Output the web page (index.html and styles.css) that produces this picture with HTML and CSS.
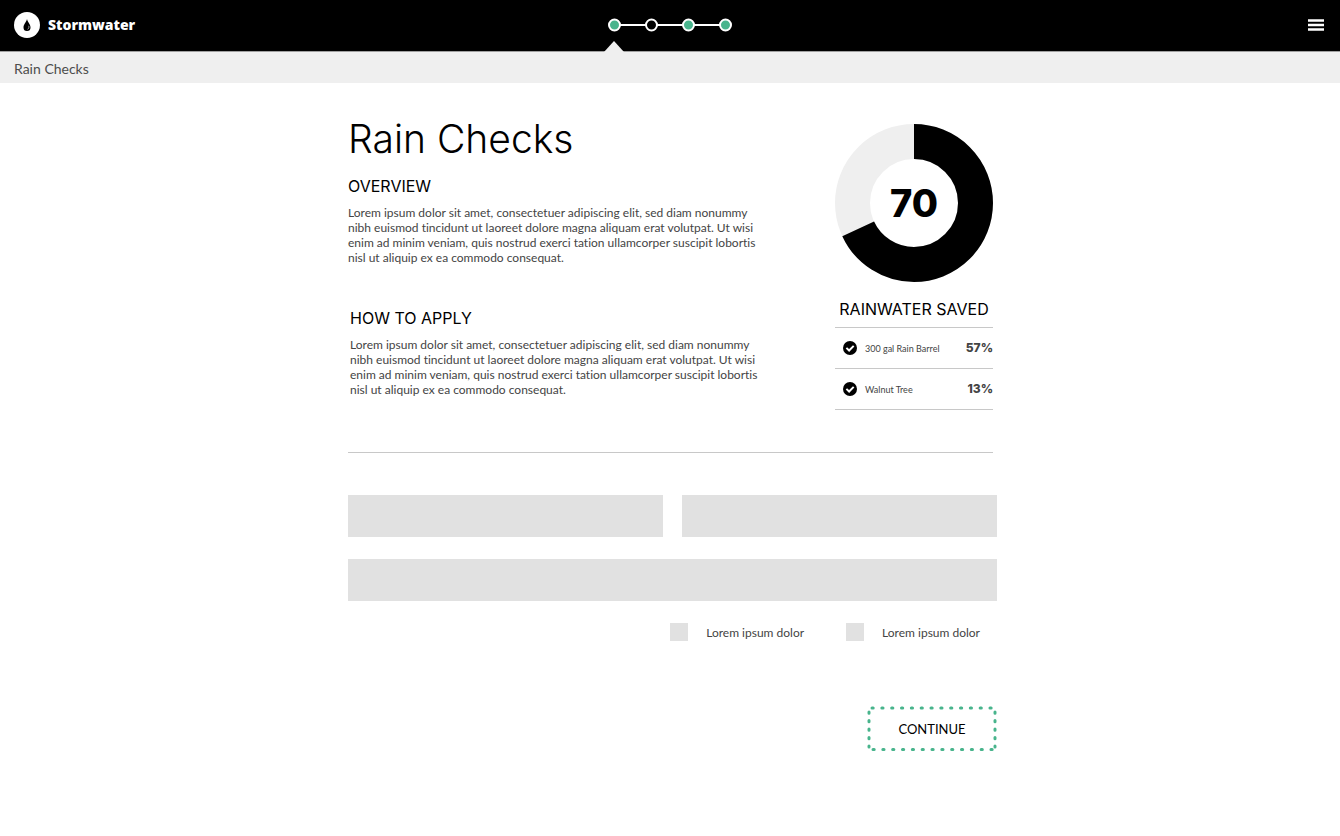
FILE: index.html
```html
<!DOCTYPE html>
<html lang="en">
<head>
<meta charset="utf-8">
<title>Stormwater – Rain Checks</title>
<meta name="viewport" content="width=device-width, initial-scale=1">
<link rel="stylesheet" href="styles.css">
</head>
<body>
<header class="topbar">
  <a class="brand" href="#">
    <svg class="brand-mark" viewBox="0 0 26 26" aria-hidden="true">
      <circle cx="13" cy="13" r="13" fill="#fff"/>
      <path d="M13 7C12.300 10.400 9.500 12.300 9.500 15.500a3.500 3.500 0 0 0 7 0C16.500 12.300 13.700 10.400 13 7z" fill="#000"/>
      <path d="M14.700 13.800c.6 1.500.1 2.800-1.200 3.500" fill="none" stroke="#fff" stroke-width=".6"/>
    </svg>
    <span>Stormwater</span>
  </a>
  <nav class="steps" aria-label="Progress">
    <svg class="steps-track" viewBox="0 0 126 16" role="img" aria-label="Step 1 of 4">
      <path d="M8 8H119" stroke="#fff" stroke-width="2"/>
      <g stroke="#fff" stroke-width="2">
        <circle cx="8.500" cy="8" r="5.500" fill="#48b48c"/>
        <circle cx="45.500" cy="8" r="5.500" fill="#000"/>
        <circle cx="82.500" cy="8" r="5.500" fill="#48b48c"/>
        <circle cx="119.500" cy="8" r="5.500" fill="#48b48c"/>
      </g>
    </svg>
    <span class="steps-pointer"></span>
  </nav>
  <button class="menu" type="button" aria-label="Menu">
    <svg viewBox="0 0 16 12" aria-hidden="true"><path d="M0 1.500H16M0 6H16M0 10.500H16" stroke="#fff" stroke-width="2.400"/></svg>
  </button>
</header>
<div class="crumb">Rain Checks</div>

<main class="page">
  <div class="intro">
    <div class="copy">
      <h1>Rain Checks</h1>
      <section>
        <h2>OVERVIEW</h2>
        <p>Lorem ipsum dolor sit amet, consectetuer adipiscing elit, sed diam nonummy nibh euismod tincidunt ut laoreet dolore magna aliquam erat volutpat. Ut wisi enim ad minim veniam, quis nostrud exerci tation ullamcorper suscipit lobortis nisl ut aliquip ex ea commodo consequat.</p>
      </section>
      <section class="apply">
        <h2>HOW TO APPLY</h2>
        <p>Lorem ipsum dolor sit amet, consectetuer adipiscing elit, sed diam nonummy nibh euismod tincidunt ut laoreet dolore magna aliquam erat volutpat. Ut wisi enim ad minim veniam, quis nostrud exerci tation ullamcorper suscipit lobortis nisl ut aliquip ex ea commodo consequat.</p>
      </section>
    </div>
    <aside class="saved">
      <div class="donut">
        <svg viewBox="0 0 158 158" aria-hidden="true">
          <g fill="none" stroke-width="35" transform="rotate(-90 79 79)">
            <circle cx="79" cy="79" r="61.500" stroke="#efefef"/>
            <circle cx="79" cy="79" r="61.500" stroke="#000" pathLength="100" stroke-dasharray="68.1 31.900"/>
          </g>
        </svg>
        <span class="donut-value">70</span>
      </div>
      <h2>RAINWATER SAVED</h2>
      <ul class="items">
        <li>
          <svg class="check" viewBox="0 0 14 14" aria-hidden="true"><circle cx="7" cy="7" r="7"/><path d="M3.400 6.900 6.100 9.500 10.700 4.900" fill="none" stroke="#fff" stroke-width="2"/></svg>
          <span class="item-name">300 gal Rain Barrel</span>
          <strong>57%</strong>
        </li>
        <li>
          <svg class="check" viewBox="0 0 14 14" aria-hidden="true"><circle cx="7" cy="7" r="7"/><path d="M3.400 6.900 6.100 9.500 10.700 4.900" fill="none" stroke="#fff" stroke-width="2"/></svg>
          <span class="item-name">Walnut Tree</span>
          <strong>13%</strong>
        </li>
      </ul>
    </aside>
  </div>

  <form class="form">
    <div class="row">
      <input class="field" type="text" aria-label="First field">
      <input class="field" type="text" aria-label="Second field">
    </div>
    <input class="field" type="text" aria-label="Third field">
    <div class="options">
      <label><input type="checkbox"><span>Lorem ipsum dolor</span></label>
      <label><input type="checkbox"><span>Lorem ipsum dolor</span></label>
    </div>
    <button class="continue" type="button">
      <svg class="dots" viewBox="0 0 130 45" aria-hidden="true">
        <g fill="none" stroke="#48b48c" stroke-width="3" stroke-linecap="round">
          <path d="M5 2H126" stroke-dasharray="1.200 8.630"/>
          <path d="M6 43.500H126" stroke-dasharray="1.200 8.630"/>
          <path d="M2 6V41" stroke-dasharray="1.200 7.300"/>
          <path d="M128 6V41" stroke-dasharray="1.200 7.300"/>
        </g>
      </svg>
      CONTINUE
    </button>
  </form>
</main>
</body>
</html>
```

FILE: styles.css
```css
* { box-sizing: border-box; }

body {
  margin: 0;
  background: #fff;
  color: #444;
  font: 12px/15px Lato, "Open Sans", sans-serif;
  font-variant-ligatures: none;
}

h1, h2, p, ul { margin: 0; padding: 0; }

h1, h2 {
  color: #000;
  font-family: Inter, Lato, sans-serif;
}

.topbar {
  display: grid;
  grid-template-columns: 1fr auto 1fr;
  align-items: center;
  height: 52px;
  padding: 0 16px 0 14px;
  background: #000;
  border-bottom: 1px solid #a0a0a0;
}

.brand {
  display: flex;
  align-items: center;
  gap: 8px;
  padding-bottom: 1px;
  color: #fff;
  font: 800 14px/20px "Open Sans", sans-serif;
  text-decoration: none;
}

.brand-mark { width: 26px; height: 26px; }

.steps {
  position: relative;
  display: flex;
  align-items: center;
  height: 51px;
  padding-bottom: 1px;
}

.steps-track { width: 126px; height: 16px; }

.steps-pointer {
  position: absolute;
  left: -2px;
  bottom: -1px;
  border: 10px solid transparent;
  border-top: 0;
  border-bottom: 11px solid #efefef;
}

.menu {
  justify-self: end;
  display: flex;
  padding: 0 0 1px;
  border: 0;
  background: none;
}

.menu svg { width: 16px; height: 12px; }

.crumb {
  padding: 7px 14px 4px;
  background: #efefef;
  color: #4d4d4d;
  font-size: 14px;
  line-height: 20px;
}

.page {
  max-width: 654px;
  margin: 0 auto;
  padding: 35px 0 40px 5px;
}

.intro {
  display: flex;
  justify-content: space-between;
  gap: 24px;
  margin-right: 4px;
  padding-bottom: 42px;
  border-bottom: 1px solid #c8c8c8;
}

.copy { flex: 0 1 416px; }

h1 {
  font-size: 39px;
  font-weight: 300;
  line-height: 42px;
}

h2 {
  font-size: 16px;
  font-weight: 400;
  line-height: 20px;
}

.copy h2 { margin-bottom: 9px; }
.copy h1 { margin-bottom: 16px; }

.apply {
  margin-top: 43px;
  padding-left: 2px;
}

.saved {
  flex: 0 0 158px;
  padding-top: 6px;
}

.donut {
  position: relative;
  height: 158px;
  margin-bottom: 17px;
}

.donut svg { display: block; width: 158px; height: 158px; }

.donut-value {
  position: absolute;
  inset: 0;
  display: flex;
  align-items: center;
  justify-content: center;
  color: #000;
  font: 800 38px/40px Inter, sans-serif;
}

.saved h2 { text-align: center; white-space: nowrap; }

.items {
  margin-top: 8px;
  border-top: 1px solid #c8c8c8;
  list-style: none;
}

.items li {
  display: flex;
  align-items: center;
  gap: 8px;
  height: 41px;
  padding-left: 8px;
  border-bottom: 1px solid #c8c8c8;
}

.check { width: 14px; height: 14px; }

.item-name {
  flex: 1;
  font-size: 9px;
}

.items strong {
  font: 800 12px/16px Inter, sans-serif;
}

.form {
  display: flex;
  flex-direction: column;
  gap: 22px;
  padding-top: 42px;
}

.row { display: flex; gap: 19px; }

.field {
  flex: 1;
  width: 100%;
  min-width: 0;
  min-height: 42px;
  padding: 0 12px;
  border: 0;
  border-radius: 0;
  background: #e1e1e1;
  font: inherit;
}

.options {
  display: flex;
  justify-content: flex-end;
  gap: 42px;
  padding-right: 17px;
}

.options label {
  display: flex;
  align-items: center;
  gap: 18px;
}

.options input {
  width: 18px;
  height: 18px;
  margin: 0;
  appearance: none;
  background: #e1e1e1;
}

.continue {
  position: relative;
  align-self: flex-end;
  width: 130px;
  height: 45px;
  margin-top: 43px;
  padding: 0;
  border: 0;
  background: none;
  color: #000;
  font: 13px/18px Lato, sans-serif;
}

.dots {
  position: absolute;
  inset: 0;
  width: 100%;
  height: 100%;
}
```
